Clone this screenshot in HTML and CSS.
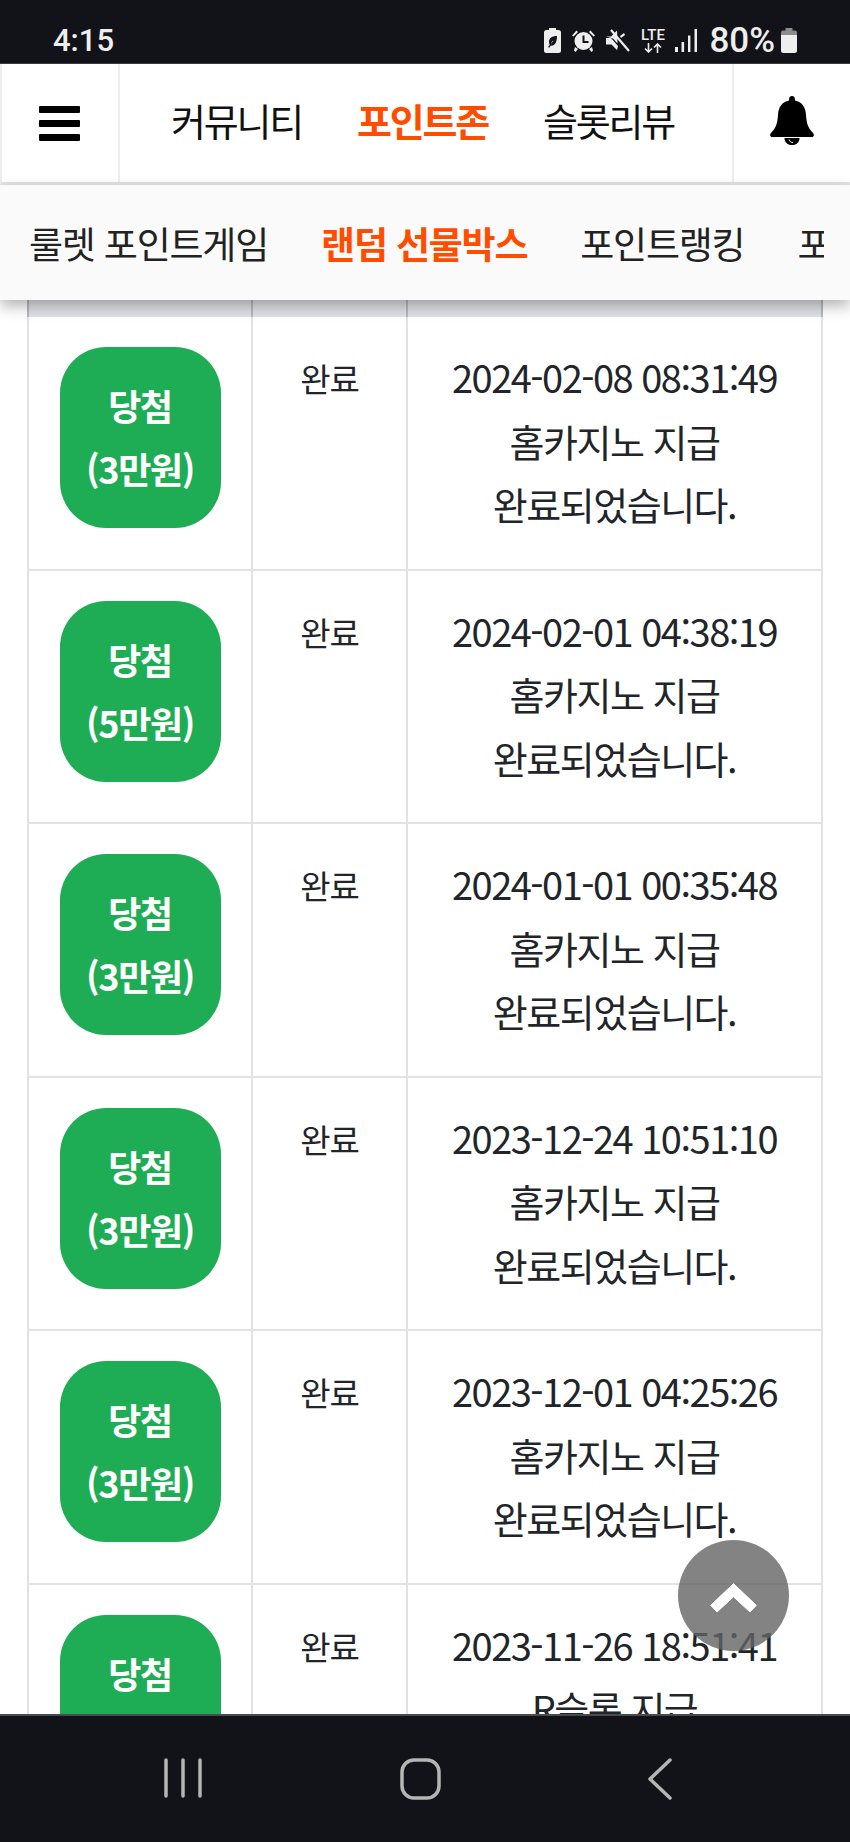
FILE: index.html
```html
<!DOCTYPE html>
<html lang="ko">

<head>
    <meta charset="UTF-8">
    <meta name="viewport" content="width=device-width, initial-scale=1.0">
    <title>랜덤 선물박스</title>
    <link rel="stylesheet" href="styles.css">
</head>

<body>
    <div class="status-bar">
        <span class="status-time">4:15</span>
        <div class="status-icons">
            <svg class="ic-saver" width="17" height="25" viewBox="0 0 17 25"><path fill="#eee" d="M5 0h7v2h2.500A2.500 2.500 0 0 1 17 4.500v18a2.500 2.500 0 0 1-2.500 2.500h-12A2.500 2.500 0 0 1 0 22.500v-18A2.500 2.500 0 0 1 2.500 2H5z"/><path fill="#121318" d="M13 8c-5 0-8 2-8 6 0 1 .3 2 .8 2.800L4 19l1.300.8 1.500-2.200C11 18 13 14 13 8zM9.500 12.500 7 16c.5-2 1.200-3 2.500-3.500z"/></svg>
            <svg class="ic-alarm" width="25" height="23" viewBox="0 0 25 23"><path fill="#eee" d="M1 6.500 5.500 1.500 7 3 2.500 7.500zM24 6.500 19.500 1.500 18 3l4.500 4.500z"/><circle cx="12.500" cy="12" r="9" fill="#eee"/><path fill="#eee" d="m4 18 3 2-2.500 3L3 21.500zM21 18l-3 2 2.500 3 1.500-1.500z"/><path fill="none" stroke="#121318" stroke-width="2" d="M12.500 6.500V13h5"/></svg>
            <svg class="ic-mute" width="24" height="23" viewBox="0 0 24 23"><path fill="#eee" d="M0 7.500h5L11 1.500l.5 13-4.500-5zM0 9h5l7 8-1 4-5.500-5.500H0zM14 7l4-3 1 2-4 3z"/><path fill="none" stroke="#eee" stroke-width="2.200" d="M5 1 23 22"/></svg>
            <div class="ic-lte">
                <span class="lte-text">LTE</span>
                <svg width="18" height="10" viewBox="0 0 18 10"><path fill="none" stroke="#eee" stroke-width="1.600" d="M4.500 0v9M1 5.500 4.500 9 8 5.500M13.500 10V1M10 4.500 13.500 1 17 4.500"/></svg>
            </div>
            <svg class="ic-signal" width="22" height="23" viewBox="0 0 22 23"><path fill="#eee" d="M0 18h3v5H0zM6.500 13h2.600v10H6.500zM13 6.500h2.400V23H13zM19.500 0H22v23h-2.500z"/></svg>
            <span class="status-pct">80%</span>
            <svg class="ic-batt" width="16" height="25" viewBox="0 0 16 25"><path fill="#8b8b8b" d="M4.500 0h7v2.500H14a2 2 0 0 1 2 2V8H0V4.500a2 2 0 0 1 2-2h2.500z"/><path fill="#eee" d="M0 7h16v15.500a2.500 2.500 0 0 1-2.500 2.500h-11A2.500 2.500 0 0 1 0 22.500z"/></svg>
        </div>
    </div>

    <div class="main-nav">
        <div class="nav-side nav-left">
            <div class="burger"><span></span><span></span><span></span></div>
        </div>
        <div class="nav-links">
            <span>커뮤니티</span>
            <span class="on">포인트존</span>
            <span>슬롯리뷰</span>
        </div>
        <div class="nav-side nav-right">
            <svg width="44" height="49" viewBox="0 0 44 49"><path fill="#000" d="M22 0c1.700 0 2.900 1.200 2.900 2.900v1.500C32 6 35.500 10.500 36 19c.5 8 2 13 7 18 1.500 1.500 1 4-1.500 4h-39C0 41-.5 38.500 1 37c5-5 6.500-10 7-18 .5-8.500 4-13 11.100-14.600V2.900C19.100 1.200 20.300 0 22 0z"/><path fill="#000" d="M14.500 42h15c0 9.500-15 9.500-15 0z"/><path fill="none" stroke="#fff" stroke-width="1" d="M19 43.500c.5 2 2 3 4 3"/></svg>
        </div>
    </div>

    <div class="sub-nav">
        <div class="sub-links">
            <span>룰렛 포인트게임</span>
            <span class="on">랜덤 선물박스</span>
            <span>포인트랭킹</span>
            <span>포</span>
        </div>
    </div>

    <div class="content">
        <table class="log">
            <colgroup>
                <col class="c1">
                <col class="c2">
                <col class="c3">
            </colgroup>
            <thead>
                <tr><th></th><th></th><th></th></tr>
            </thead>
            <tbody>
                <tr>
                    <td><div class="badge">당첨<br>(3만원)</div></td>
                    <td class="state">완료</td>
                    <td class="memo">2024-02-08 08:31:49<br>홈카지노 지급<br>완료되었습니다.</td>
                </tr>
                <tr>
                    <td><div class="badge">당첨<br>(5만원)</div></td>
                    <td class="state">완료</td>
                    <td class="memo">2024-02-01 04:38:19<br>홈카지노 지급<br>완료되었습니다.</td>
                </tr>
                <tr>
                    <td><div class="badge">당첨<br>(3만원)</div></td>
                    <td class="state">완료</td>
                    <td class="memo">2024-01-01 00:35:48<br>홈카지노 지급<br>완료되었습니다.</td>
                </tr>
                <tr>
                    <td><div class="badge">당첨<br>(3만원)</div></td>
                    <td class="state">완료</td>
                    <td class="memo">2023-12-24 10:51:10<br>홈카지노 지급<br>완료되었습니다.</td>
                </tr>
                <tr>
                    <td><div class="badge">당첨<br>(3만원)</div></td>
                    <td class="state">완료</td>
                    <td class="memo">2023-12-01 04:25:26<br>홈카지노 지급<br>완료되었습니다.</td>
                </tr>
                <tr>
                    <td><div class="badge">당첨</div></td>
                    <td class="state">완료</td>
                    <td class="memo">2023-11-26 18:51:41<br>R슬롯 지급</td>
                </tr>
            </tbody>
        </table>
        <div class="to-top">
            <svg width="47" height="30" viewBox="0 0 47 30"><path fill="#fff" stroke="#fff" stroke-width="1" stroke-linejoin="round" d="M23.500.7 46.300 22.300 40 29 23.500 13.800 7 29 .7 22.300z"/></svg>
        </div>
    </div>

    <div class="soft-keys">
        <svg width="38" height="40" viewBox="0 0 38 40"><path fill="none" stroke="#b5b5b5" stroke-width="3.500" stroke-linecap="round" d="M2 2v36M19 2v36M36 2v36"/></svg>
        <svg class="key-home" width="41" height="42" viewBox="0 0 41 42"><rect x="2" y="2" width="37" height="38" rx="12" fill="none" stroke="#b5b5b5" stroke-width="3.500"/></svg>
        <svg width="24" height="42" viewBox="0 0 24 42"><path fill="none" stroke="#b5b5b5" stroke-width="3.500" stroke-linecap="round" stroke-linejoin="round" d="M22 2 2 21l20 19"/></svg>
    </div>
</body>

</html>
```

FILE: styles.css
```css
* {
    box-sizing: border-box;
}

body {
    font-family: "Noto Sans CJK KR", "Noto Sans", sans-serif;
    background-color: #fff;
    color: #212529;
    margin: 0;
    height: 1842px;
    display: flex;
    flex-direction: column;
    overflow: hidden;
}

/* phone status bar */
.status-bar {
    height: 64px;
    flex: none;
    background: #121318;
    border-bottom: 1px solid #3a3b40;
    color: #eee;
    padding: 18px 53px 0;
    display: flex;
    justify-content: space-between;
    align-items: center;
}

.status-time {
    font-family: Roboto, sans-serif;
    font-weight: 500;
    font-size: 31px;
}

.status-icons {
    display: flex;
    align-items: center;
    gap: 10px;
}

.ic-lte {
    display: flex;
    flex-direction: column;
    align-items: center;
    width: 25px;
    gap: 1px;
}

.lte-text {
    font-family: Roboto, sans-serif;
    font-weight: 500;
    font-size: 15px;
    line-height: 14px;
}

.status-pct {
    font-family: Roboto, sans-serif;
    font-weight: 500;
    font-size: 35px;
    margin-left: 2px;
    margin-right: -4px;
}

/* main nav */
.main-nav {
    height: 121px;
    flex: none;
    background: #fff;
    border-bottom: 3px solid #e4e4e4;
    display: flex;
    border-left: 2px solid #eee;
}

.nav-side {
    display: flex;
    align-items: center;
    justify-content: center;
    flex: none;
}

.nav-left {
    width: 118px;
    border-right: 2px solid #eee;
}

.nav-right {
    width: 118px;
    border-left: 2px solid #eee;
    padding-bottom: 5px;
}

.burger {
    width: 41px;
    height: 35px;
    display: flex;
    flex-direction: column;
    justify-content: space-between;
    margin-right: 2px;
}

.burger span {
    height: 7px;
    background: #000;
    border-radius: 1px;
}

.nav-links {
    flex: 1;
    display: flex;
    justify-content: center;
    align-items: center;
    gap: 55px;
    font-size: 38px;
    letter-spacing: -2.200px;
    color: #111;
    padding: 0 7px 7px 0;
}

.on {
    color: #ff4d00;
    font-weight: 700;
}

/* sub nav, its shadow falls on the table */
.sub-nav {
    height: 115px;
    flex: none;
    background: #fafafa;
    box-shadow: 0 6px 14px rgba(0, 0, 0, 0.3);
    padding: 0 26px 0 29px;
    position: relative;
    z-index: 2;
}

.sub-links {
    height: 100%;
    display: flex;
    align-items: center;
    gap: 53px;
    overflow: hidden;
    white-space: nowrap;
    font-size: 37px;
    letter-spacing: -1.200px;
    color: #222;
}

.sub-links span {
    flex: none;
}

/* table */
.content {
    flex: 1;
    position: relative;
    overflow: hidden;
    padding: 0 27px;
    min-height: 0;
}

.log {
    width: 796px;
    table-layout: fixed;
    border-collapse: collapse;
}

.c1 {
    width: 224px;
}

.c2 {
    width: 155px;
}

.log th {
    height: 16px;
    padding: 0;
    background: #dee2e6;
    border: 2px solid #b8b8b8;
    border-top: none;
    border-bottom: none;
}

.log td {
    border: 2px solid #e2e2e2;
    height: 253.500px;
    padding: 30px 0 0;
    text-align: center;
    vertical-align: top;
}

.badge {
    width: 161px;
    height: 181px;
    margin: 0 auto;
    background: #1ead55;
    border-radius: 46px;
    color: #fff;
    font-size: 36px;
    font-weight: 700;
    line-height: 63px;
    letter-spacing: -1.300px;
    padding-top: 27px;
}

.log .state {
    font-size: 33px;
    line-height: 63px;
    letter-spacing: -1px;
}

.log .memo {
    font-size: 38px;
    line-height: 63.500px;
    letter-spacing: -1.500px;
    padding-top: 28px;
}

.to-top {
    position: absolute;
    left: 678px;
    top: 1240px;
    width: 111px;
    height: 111px;
    border-radius: 50%;
    background: rgba(100, 100, 100, 0.8);
    display: flex;
    align-items: center;
    justify-content: center;
    padding-top: 4px;
}

/* phone soft keys */
.soft-keys {
    height: 128px;
    flex: none;
    background: #121318;
    border-top: 2px solid #4a4b50;
    position: relative;
    z-index: 3;
    padding: 42px 0 0 164px;
    display: flex;
    gap: 198px;
    align-items: flex-start;
}

.key-home {
    margin-right: 9px;
}
```
